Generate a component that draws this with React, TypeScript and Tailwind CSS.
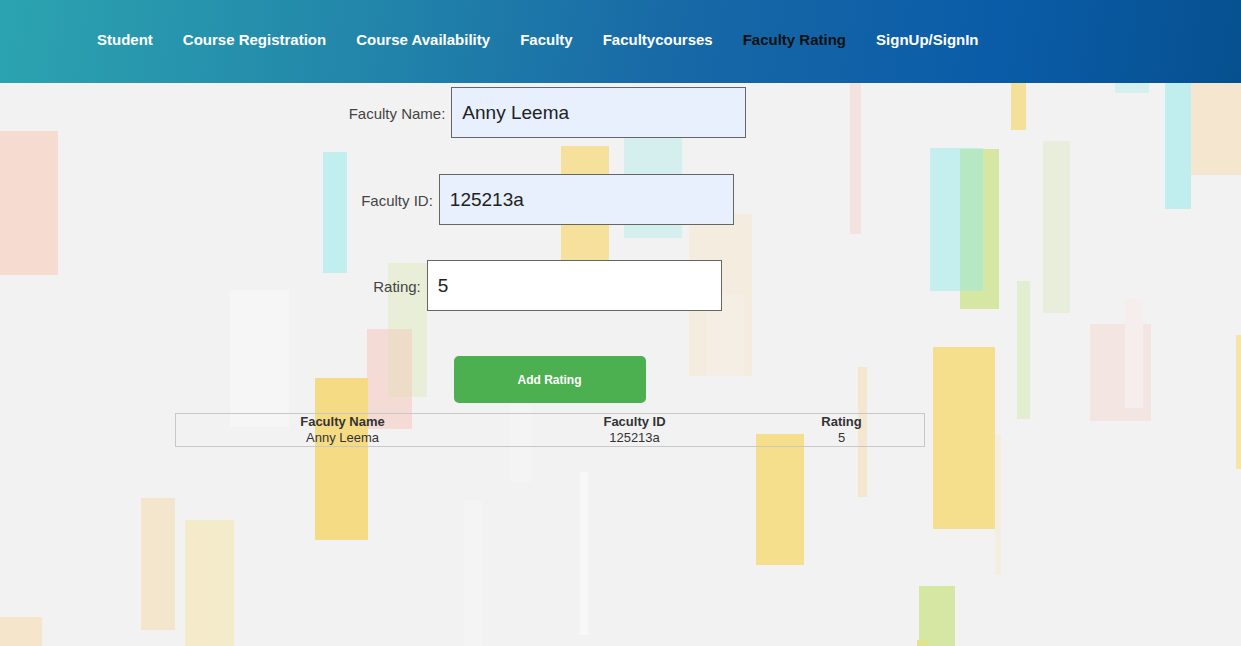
import React from 'react';

const NAV = ['Student', 'Course Registration', 'Course Availability', 'Faculty', 'Facultycourses', 'Faculty Rating', 'SignUp/SignIn'];

// Decorative background bars: [left, top, width, height, colour]
const BARS: [number, number, number, number, string][] = [
  [0, 131, 58, 144, '#f6dbd1'],
  [323, 152, 24, 121, '#c1eeee'],
  [230, 290, 59, 137, '#f6f6f6'],
  [388, 263, 39, 134, '#e8eed8'],
  [367, 329, 45, 100, '#f4dbd5'],
  [388, 329, 24, 68, '#eddcc8'],
  [315, 378, 53, 162, '#f5dc84'],
  [141, 498, 34, 132, '#f4e6cd'],
  [185, 520, 49, 126, '#f4ebcb'],
  [0, 617, 42, 29, '#f5e5cb'],
  [580, 472, 8, 163, '#f8f8f8'],
  [464, 500, 18, 146, '#f4f4f4'],
  [510, 401, 22, 81, '#f4f4f4'],
  [561, 146, 48, 114, '#f5e09c'],
  [624, 100, 58, 138, '#d5efee'],
  [689, 214, 63, 162, '#f5ece0'],
  [707, 295, 37, 81, '#f5eee4'],
  [850, 80, 11, 154, '#f3e2df'],
  [1011, 80, 15, 50, '#f5e09a'],
  [1115, 80, 34, 13, '#d5f0ef'],
  [1165, 80, 26, 129, '#c0eeee'],
  [1191, 80, 50, 95, '#f5e6cf'],
  [930, 148, 53, 143, '#c5eeee'],
  [960, 149, 39, 160, '#d6e7a3'],
  [960, 149, 23, 142, '#b5e8c3'],
  [1043, 141, 27, 172, '#e8eedb'],
  [1017, 281, 13, 138, '#e3edcf'],
  [1090, 324, 61, 97, '#f3e5e2'],
  [1125, 299, 18, 109, '#f6eeed'],
  [1236, 335, 5, 134, '#f5e6a8'],
  [933, 347, 62, 182, '#f5df8d'],
  [995, 435, 6, 140, '#f3ede2'],
  [756, 434, 48, 131, '#f5df8d'],
  [858, 367, 9, 130, '#f5e6cf'],
  [919, 586, 36, 60, '#d6e7a3'],
  [917, 640, 11, 6, '#dfe58e'],
];

function Field({ label, value, filled }: { label: string; value: string; filled?: boolean }) {
  return (
    <div className="flex items-center gap-[6px]">
      <label className="pt-[3px] text-[15px] text-[#444]">{label}</label>
      <input
        readOnly
        value={value}
        className={`w-[295px] h-[51px] border border-[#666] px-[10px] text-[19px] text-[#222] outline-none ${filled ? 'bg-[#e8f0fe]' : 'bg-white'}`}
        style={{ fontFamily: 'inherit' }}
      />
    </div>
  );
}

export default function App() {
  return (
    <div className="relative w-[1241px] h-[646px] overflow-hidden bg-[#f2f2f2]" style={{ fontFamily: '"Liberation Sans", Arial, sans-serif' }}>
      {/* background bars */}
      {BARS.map(([l, t, w, h, c], i) => (
        <div key={i} className="absolute" style={{ left: l, top: t, width: w, height: h, background: c }} />
      ))}

      <div className="relative z-10">
        {/* nav */}
        <header className="h-[83px] flex items-center pb-[2px] pl-[82px] bg-[linear-gradient(100deg,#2ca4b0_0%,#2285aa_30%,#1768a6_55%,#0a5ca8_80%,#06508f_100%)]">
          {NAV.map((n) => (
            <a key={n} className={`px-[15px] text-[15px] font-bold ${n === 'Faculty Rating' ? 'text-[#111]' : 'text-white'}`}>
              {n}
            </a>
          ))}
        </header>

        {/* form */}
        <div className="flex flex-col items-center pr-[146px] pt-[4px]">
          <Field label="Faculty Name:" value="Anny Leema" filled />
          <div className="mt-[36px]">
            <Field label="Faculty ID:" value="125213a" filled />
          </div>
          <div className="mt-[35px]">
            <Field label="Rating:" value="5" />
          </div>
          <button className="mt-[45px] ml-[4px] w-[192px] h-[47px] rounded-[5px] bg-[#4caf50] text-white text-[12px] font-bold">
            Add Rating
          </button>
          <div className="mt-[10px] ml-[4px] w-[750px] border border-[#c8c8c8] text-[13px] leading-[16px] text-[#333]">
            <div className="grid grid-cols-[334px_250px_1fr] text-center font-bold">
              <div>Faculty Name</div>
              <div>Faculty ID</div>
              <div>Rating</div>
            </div>
            <div className="grid grid-cols-[334px_250px_1fr] text-center">
              <div>Anny Leema</div>
              <div>125213a</div>
              <div>5</div>
            </div>
          </div>
        </div>
      </div>
    </div>
  );
}
